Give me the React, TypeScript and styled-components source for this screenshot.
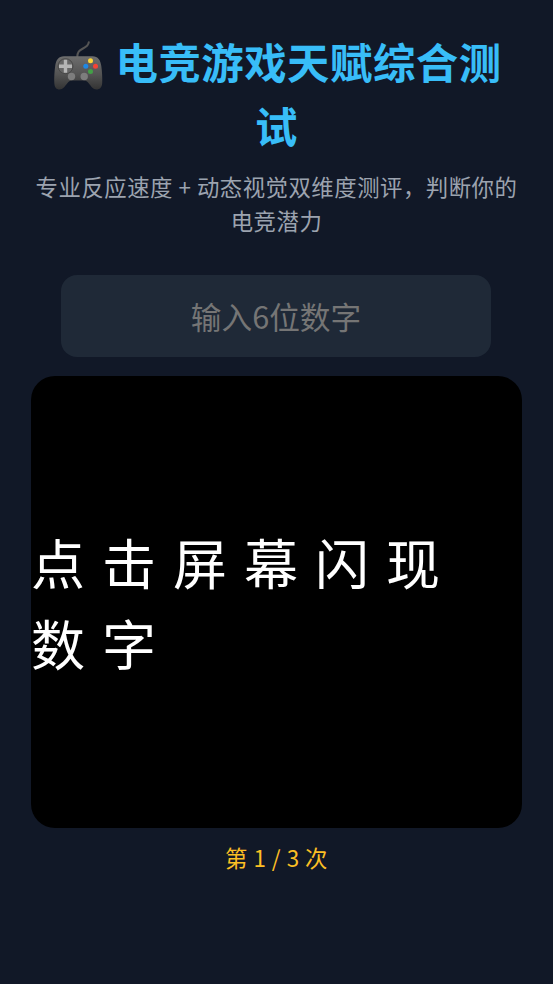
import React from 'react';
import styled, { createGlobalStyle } from 'styled-components';

const GlobalStyle = createGlobalStyle`
    html, body {
        margin: 0;
        padding: 0;
        background-color: #111827;
    }
`

function GamepadIcon() {
    return (
        <PadIcon viewBox="0 0 54 52" aria-hidden="true">
            <defs>
                <linearGradient id="padBody" x1="0" y1="0" x2="0" y2="1">
                    <stop offset="0" stopColor="#6e6e6e" />
                    <stop offset="0.55" stopColor="#535353" />
                    <stop offset="1" stopColor="#333" />
                </linearGradient>
            </defs>
            <path d="M26.2 19.2C26.5 14 28 12.500 32 10.500C35.500 8.800 37.500 7.500 37.800 4.200" fill="none" stroke="#555" strokeWidth="2" strokeLinecap="round" />
            <path d="M13 18.200H41.500C47 18.200 49.500 22 50.300 28C51 33 51.500 40 51.200 45C51 49.500 48.500 51.500 45.500 51.500C42 51.500 40 48 37.500 45C36 43 34.500 42.500 32 42.500H22C19.500 42.500 18 43 16.500 45C14 48 12 51.500 8.500 51.500C5.500 51.500 3.500 49.500 3.300 45C3 40 3.500 33 4.200 28C5 22 7.500 18.200 13 18.200Z" fill="url(#padBody)" />
            <circle cx="14.500" cy="28.200" r="7.500" fill="#666" stroke="#484848" />
            <path d="M12.800 21.700h3.400v4.800h4.800v3.400h-4.800v4.800h-3.400v-4.800h-4.800v-3.400h4.800z" fill="#b5b5b5" />
            <circle cx="20.500" cy="38.500" r="3.700" fill="#7d7d7d" />
            <circle cx="33.200" cy="38.500" r="3.700" fill="#7d7d7d" />
            <circle cx="39.500" cy="22.800" r="2.500" fill="#fdd835" />
            <circle cx="44.500" cy="28.200" r="2.500" fill="#f44336" />
            <circle cx="34.800" cy="28.200" r="2.500" fill="#1e88e5" />
            <circle cx="39.500" cy="33.500" r="2.500" fill="#43a047" />
        </PadIcon>
    )
}

function App() {
    return (
        <Page>
            <GlobalStyle />
            <Title><GamepadIcon /> 电竞游戏天赋综合测试</Title>
            <Subtitle>专业反应速度 + 动态视觉双维度测评，判断你的电竞潜力</Subtitle>
            <CodeInput placeholder="输入6位数字" />
            <Stage>
                <StageText>点击屏幕闪现数字</StageText>
            </Stage>
            <Counter>第 1 / 3 次</Counter>
        </Page>
    )
}

const Page = styled.div`
    width: 553px;
    height: 984px;
    box-sizing: border-box;
    padding: 29px 31px 0;
    display: flex;
    flex-direction: column;
    align-items: center;
    overflow: hidden;
    background-color: #111827;
    font-family: "Noto Sans CJK SC", "Noto Sans", sans-serif;
    letter-spacing: 0.5px;
`

const Title = styled.h1`
    margin: 0;
    font-size: 42.4px;
    line-height: 63.6px;
    font-weight: 700;
    color: #38bdf8;
    text-align: center;
`

const PadIcon = styled.svg`
    width: 54px;
    height: 52px;
    vertical-align: -11px;
`

const Subtitle = styled.p`
    margin: 13.8px 0 0;
    font-size: 22.4px;
    line-height: 33.6px;
    color: #9ca3af;
    text-align: center;
`

const CodeInput = styled.input`
    width: 430px;
    height: 82px;
    box-sizing: border-box;
    margin: 37.5px 1px 0 0;
    border: none;
    border-radius: 16px;
    background-color: #1f2937;
    font-family: inherit;
    font-size: 30.7px;
    text-align: center;
    color: #fff;
    outline: none;

    &::placeholder {
        color: #757575;
        opacity: 1;
    }
`

const Stage = styled.div`
    width: 491px;
    height: 452px;
    margin-top: 19px;
    border-radius: 24px;
    background-color: #000;
    display: flex;
    align-items: center;
`

const StageText = styled.div`
    font-size: 54px;
    line-height: 81px;
    letter-spacing: 17px;
    color: #fff;
`

const Counter = styled.div`
    margin-top: 12px;
    font-size: 22.4px;
    line-height: 34px;
    color: #fbbf24;
`

export default App
